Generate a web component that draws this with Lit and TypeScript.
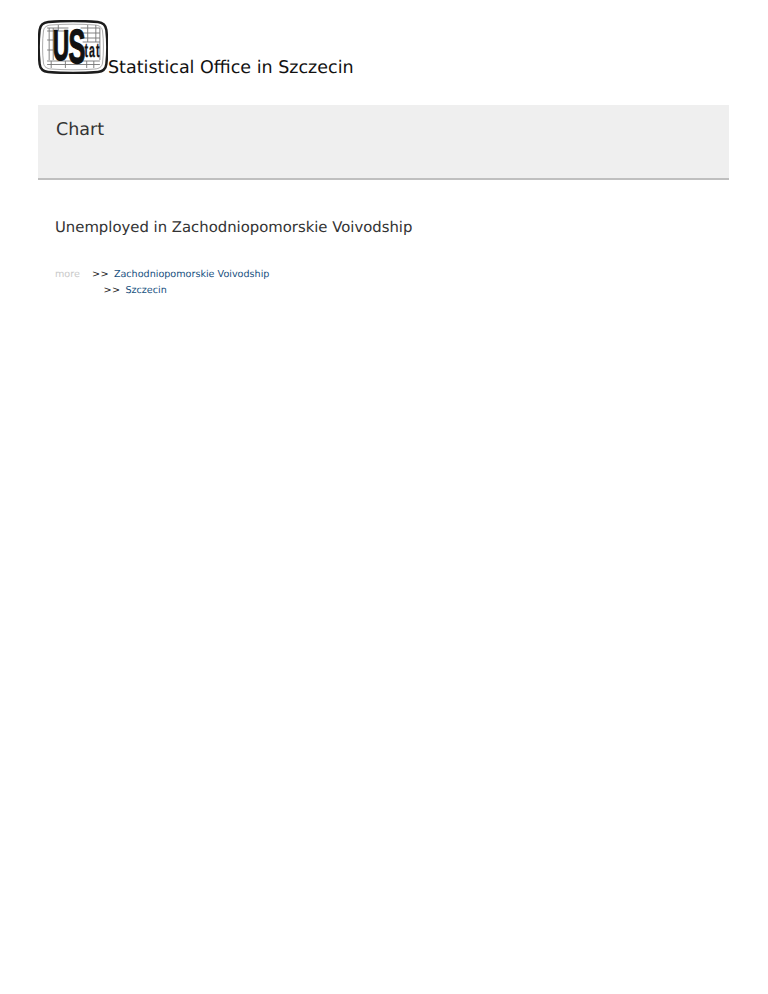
import { LitElement, html, css } from "lit";
import { customElement } from "lit/decorators.js";

@customElement("app-root")
export class AppRoot extends LitElement {
  static styles = css`
    :host {
      display: block;
      min-height: 994px;
      background: #fff;
      font-family: "DejaVu Sans", sans-serif;
      color: #222;
      text-rendering: geometricPrecision;
    }
    .page {
      padding: 20px 39px 0 38px;
    }
    .brand {
      display: flex;
      align-items: flex-end;
      height: 56px;
      color: #111;
      font-size: 17.5px;
      line-height: 20px;
    }
    .logo {
      width: 70px;
      height: 54px;
      flex: none;
      align-self: flex-start;
    }
    .brand-name {
      margin-bottom: -2px;
    }
    .band {
      box-sizing: border-box;
      height: 75px;
      margin-top: 29px;
      padding: 15px 18px 0;
      background: #efefef;
      border-bottom: 2px solid #bfbfbf;
      font-size: 17.5px;
      line-height: 21px;
      color: #333;
    }
    .heading {
      margin: 38px 0 0 17px;
      font-size: 14.85px;
      line-height: 18px;
      font-weight: normal;
      color: #333;
    }
    .links {
      display: grid;
      grid-template-columns: 37px auto;
      margin: 31px 0 0 17px;
      font-size: 9.6px;
      line-height: 16px;
      justify-content: start;
    }
    .more {
      color: #c9c9c9;
    }
    .list {
      display: flex;
      flex-direction: column;
      align-items: flex-start;
    }
    .row {
      display: flex;
      gap: 5px;
    }
    .row.sub {
      margin-left: 11.5px;
    }
    .arrow {
      color: #222;
      letter-spacing: 0.4px;
    }
    a {
      color: #164f7e;
      text-decoration: none;
    }
  `;

  render() {
    return html`
      <div class="page">
        <div class="brand">
          <svg class="logo" viewBox="0 0 69 54" preserveAspectRatio="none" aria-hidden="true">
            <path d="M10 2 C26 0.6 43 0.6 59 2 C64.5 2.6 66.8 5 67.4 10 C68.6 21 68.6 33 67.4 44 C66.8 49 64.5 51.4 59 52 C43 53.4 26 53.4 10 52 C4.5 51.4 2.2 49 1.6 44 C0.4 33 0.4 21 1.6 10 C2.2 5 4.5 2.6 10 2 Z" fill="#fff" stroke="#1c1c1c" stroke-width="2.4"/>
            <path d="M13 5 C27 3.9 42 3.9 56 5 C60.5 5.4 63 7 63.6 11 C64.8 21 64.8 33 63.6 43 C63 47 60.5 48.6 56 49 C42 50.1 27 50.1 13 49 C8.5 48.6 6 47 5.4 43 C4.2 33 4.2 21 5.4 11 C6 7 8.5 5.4 13 5 Z" fill="none" stroke="#888" stroke-width="0.7"/>
            <g stroke="#777" stroke-width="0.9" fill="none">
              <path d="M9 8H30M9 11H30M42 8H61M42 13H61M44 18H61M44 22H61M11 8V40M15 8V40M9 20H15M9 30H15M20 5V11M49 5V22M57 5V22M61 8V40"/>
              <path d="M9 41H61M9 44.5H61M13 41V48M27 41V48M48 41V48M55 41V48"/>
            </g>
            <text transform="scale(0.52 1)" font-family="Liberation Sans" font-weight="700" fill="#111" stroke="#111" stroke-width="1.4"><tspan x="28" y="40" font-size="43">U</tspan><tspan x="58" y="43" font-size="48">S</tspan><tspan x="88" y="37" font-size="20" letter-spacing="2" stroke-width="0.3">tat</tspan></text>
          </svg>
          <span class="brand-name">Statistical Office in Szczecin</span>
        </div>
        <div class="band">Chart</div>
        <h1 class="heading">Unemployed in Zachodniopomorskie Voivodship</h1>
        <div class="links">
          <span class="more">more</span>
          <div class="list">
            <div class="row"><span class="arrow">&gt;&gt;</span><a href="#">Zachodniopomorskie Voivodship</a></div>
            <div class="row sub"><span class="arrow">&gt;&gt;</span><a href="#">Szczecin</a></div>
          </div>
        </div>
      </div>
    `;
  }
}
